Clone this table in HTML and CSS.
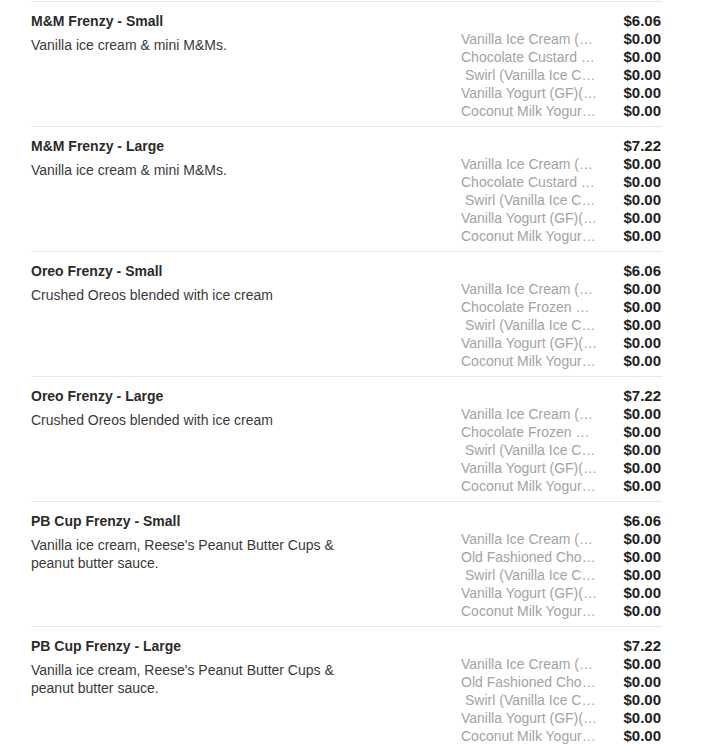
FILE: index.html
```html
<!DOCTYPE html>
<html>
<head>
<meta charset="utf-8">
<link rel="stylesheet" href="styles.css">
</head>
<body>
<div class="menu">
  <div class="item">
    <div class="info">
      <div class="title">M&amp;M Frenzy - Small</div>
      <div class="desc">Vanilla ice cream &amp; mini M&amp;Ms.</div>
    </div>
    <div class="prices">
      <div class="name"></div><div class="price">$6.06</div>
      <div class="name">Vanilla Ice Cream (Regular)</div><div class="price">$0.00</div>
      <div class="name">Chocolate Custard (Regular)</div><div class="price">$0.00</div>
      <div class="name indent">Swirl (Vanilla Ice Cream &amp; Chocolate)</div><div class="price">$0.00</div>
      <div class="name">Vanilla Yogurt (GF)(Regular)</div><div class="price">$0.00</div>
      <div class="name">Coconut Milk Yogurt (Vegan)</div><div class="price">$0.00</div>
    </div>
  </div>
  <div class="item">
    <div class="info">
      <div class="title">M&amp;M Frenzy - Large</div>
      <div class="desc">Vanilla ice cream &amp; mini M&amp;Ms.</div>
    </div>
    <div class="prices">
      <div class="name"></div><div class="price">$7.22</div>
      <div class="name">Vanilla Ice Cream (Regular)</div><div class="price">$0.00</div>
      <div class="name">Chocolate Custard (Regular)</div><div class="price">$0.00</div>
      <div class="name indent">Swirl (Vanilla Ice Cream &amp; Chocolate)</div><div class="price">$0.00</div>
      <div class="name">Vanilla Yogurt (GF)(Regular)</div><div class="price">$0.00</div>
      <div class="name">Coconut Milk Yogurt (Vegan)</div><div class="price">$0.00</div>
    </div>
  </div>
  <div class="item">
    <div class="info">
      <div class="title">Oreo Frenzy - Small</div>
      <div class="desc">Crushed Oreos blended with ice cream</div>
    </div>
    <div class="prices">
      <div class="name"></div><div class="price">$6.06</div>
      <div class="name">Vanilla Ice Cream (Regular)</div><div class="price">$0.00</div>
      <div class="name">Chocolate Frozen Custard</div><div class="price">$0.00</div>
      <div class="name indent">Swirl (Vanilla Ice Cream &amp; Chocolate)</div><div class="price">$0.00</div>
      <div class="name">Vanilla Yogurt (GF)(Regular)</div><div class="price">$0.00</div>
      <div class="name">Coconut Milk Yogurt (Vegan)</div><div class="price">$0.00</div>
    </div>
  </div>
  <div class="item">
    <div class="info">
      <div class="title">Oreo Frenzy - Large</div>
      <div class="desc">Crushed Oreos blended with ice cream</div>
    </div>
    <div class="prices">
      <div class="name"></div><div class="price">$7.22</div>
      <div class="name">Vanilla Ice Cream (Regular)</div><div class="price">$0.00</div>
      <div class="name">Chocolate Frozen Custard</div><div class="price">$0.00</div>
      <div class="name indent">Swirl (Vanilla Ice Cream &amp; Chocolate)</div><div class="price">$0.00</div>
      <div class="name">Vanilla Yogurt (GF)(Regular)</div><div class="price">$0.00</div>
      <div class="name">Coconut Milk Yogurt (Vegan)</div><div class="price">$0.00</div>
    </div>
  </div>
  <div class="item">
    <div class="info">
      <div class="title">PB Cup Frenzy - Small</div>
      <div class="desc">Vanilla ice cream, Reese's Peanut Butter Cups &amp;<br>peanut butter sauce.</div>
    </div>
    <div class="prices">
      <div class="name"></div><div class="price">$6.06</div>
      <div class="name">Vanilla Ice Cream (Regular)</div><div class="price">$0.00</div>
      <div class="name">Old Fashioned Chocolate</div><div class="price">$0.00</div>
      <div class="name indent">Swirl (Vanilla Ice Cream &amp; Chocolate)</div><div class="price">$0.00</div>
      <div class="name">Vanilla Yogurt (GF)(Regular)</div><div class="price">$0.00</div>
      <div class="name">Coconut Milk Yogurt (Vegan)</div><div class="price">$0.00</div>
    </div>
  </div>
  <div class="item">
    <div class="info">
      <div class="title">PB Cup Frenzy - Large</div>
      <div class="desc">Vanilla ice cream, Reese's Peanut Butter Cups &amp;<br>peanut butter sauce.</div>
    </div>
    <div class="prices">
      <div class="name"></div><div class="price">$7.22</div>
      <div class="name">Vanilla Ice Cream (Regular)</div><div class="price">$0.00</div>
      <div class="name">Old Fashioned Chocolate</div><div class="price">$0.00</div>
      <div class="name indent">Swirl (Vanilla Ice Cream &amp; Chocolate)</div><div class="price">$0.00</div>
      <div class="name">Vanilla Yogurt (GF)(Regular)</div><div class="price">$0.00</div>
      <div class="name">Coconut Milk Yogurt (Vegan)</div><div class="price">$0.00</div>
    </div>
  </div>
</div>
</body>
</html>
```

FILE: styles.css
```css
html, body {
  margin: 0;
  padding: 0;
  background: #ffffff;
}
body {
  font-family: "Liberation Sans", Arial, sans-serif;
  color: #333333;
}
.menu {
  margin-left: 31px;
  width: 631px;
}
.item {
  border-top: 1px solid #e8e8e8;
  height: 125px;
  padding-top: 10px;
  box-sizing: border-box;
  display: flex;
  justify-content: space-between;
}
.item:first-child {
  margin-top: 1px;
}
.title {
  font-size: 14px;
  font-weight: bold;
  line-height: 18px;
  color: #2b2b2b;
}
.desc {
  margin-top: 6px;
  font-size: 14px;
  line-height: 18px;
  color: #3a3a3a;
}
.prices {
  display: grid;
  grid-template-columns: 136px 65px;
  grid-auto-rows: 18px;
  width: 201px;
}
.name {
  font-size: 14px;
  line-height: 18px;
  color: #a3a3a3;
  white-space: nowrap;
  overflow: hidden;
  text-overflow: ellipsis;
}
.name.indent {
  padding-left: 4px;
}
.price {
  font-size: 15px;
  font-weight: bold;
  line-height: 18px;
  text-align: right;
  color: #222222;
  padding-right: 1px;
}
```
